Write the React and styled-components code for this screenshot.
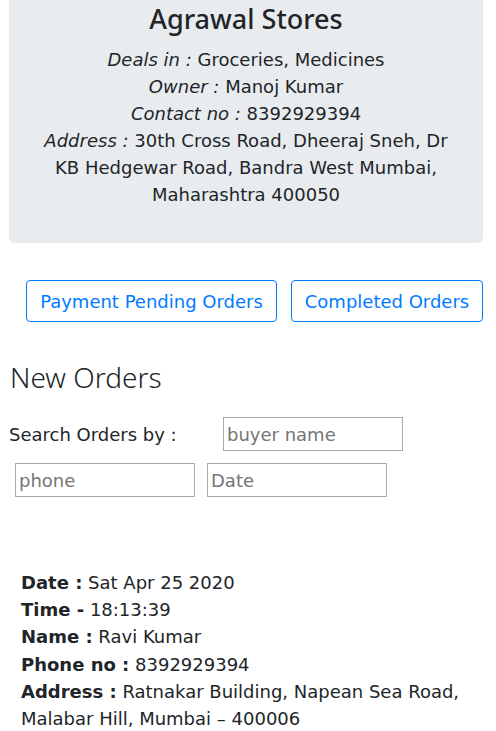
import React from 'react'
import styled, { createGlobalStyle } from 'styled-components'

const GlobalStyle = createGlobalStyle`
  * { box-sizing: border-box; }
  body {
    margin: 0;
    background: #fff;
    color: #212529;
    font-family: "DejaVu Sans", Verdana, sans-serif;
    font-size: 18px;
    line-height: 1.5;
  }
`

const Page = styled.div`
  padding: 0 13px 0 9px;
`

const StoreCard = styled.div`
  background-color: #e9ecef;
  border-radius: 0 0 5px 5px;
  text-align: center;
  padding: 0 27px 35px;
`

const StoreName = styled.h3`
  margin: 0 0 9px;
  font-family: "Noto Sans", "Open Sans", sans-serif;
  font-weight: 500;
  font-size: 27px;
  line-height: 37px;
`

const Info = styled.div`
  line-height: 27px;
`

const Label = styled.i`
  font-style: italic;
`

const ButtonRow = styled.div`
  display: flex;
  justify-content: flex-end;
  gap: 14px;
  margin-top: 37px;
`

const OutlineButton = styled.button`
  font-family: "DejaVu Sans", Verdana, sans-serif;
  font-size: 18px;
  line-height: 27px;
  color: #007bff;
  background: transparent;
  border: 1px solid #007bff;
  border-radius: 4px;
  padding: 6.5px 8px;
  width: ${p => p.w}px;
`

const SectionTitle = styled.h2`
  margin: 35px 0 0 1px;
  font-family: "Noto Sans", "Open Sans", sans-serif;
  font-weight: 300;
  font-size: 28px;
  line-height: 40px;
`

const SearchRow = styled.div`
  display: flex;
  align-items: center;
  margin-top: ${p => p.top ?? 12}px;
  padding-left: ${p => p.indent ?? 0}px;
  gap: ${p => p.gap ?? 12}px;
`

const SearchLabel = styled.span`
  width: 214px;
  flex-shrink: 0;
`

const Field = styled.input`
  width: 180px;
  height: 34px;
  margin: 0;
  border: 1px solid #a9a9a9;
  padding: 0 3px;
  font-family: "DejaVu Sans", Verdana, sans-serif;
  font-size: 18px;
  color: #212529;
  &::placeholder { color: #757575; }
`

const OrderCard = styled.div`
  margin-top: 72px;
  padding-left: 12px;
  line-height: 27.2px;
`

const Detail = styled.div``

const order = [
  ['Date :', ' Sat Apr 25 2020'],
  ['Time -', ' 18:13:39'],
  ['Name :', ' Ravi Kumar'],
  ['Phone no :', ' 8392929394'],
  ['Address :', ' Ratnakar Building, Napean Sea Road, Malabar Hill, Mumbai – 400006'],
]

export default function App() {
  return (
    <Page>
      <GlobalStyle />
      <StoreCard>
        <StoreName>Agrawal Stores</StoreName>
        <Info><Label>Deals in :</Label> Groceries, Medicines</Info>
        <Info><Label>Owner :</Label> Manoj Kumar</Info>
        <Info><Label>Contact no :</Label> 8392929394</Info>
        <Info>
          <Label>Address :</Label> 30th Cross Road, Dheeraj Sneh, Dr KB Hedgewar Road, Bandra West Mumbai, Maharashtra 400050
        </Info>
      </StoreCard>

      <ButtonRow>
        <OutlineButton w={251}>Payment Pending Orders</OutlineButton>
        <OutlineButton w={192}>Completed Orders</OutlineButton>
      </ButtonRow>

      <SectionTitle>New Orders</SectionTitle>

      <SearchRow top={20} gap={0}>
        <SearchLabel>Search Orders by :</SearchLabel>
        <Field placeholder="buyer name" />
      </SearchRow>
      <SearchRow indent={6} gap={12}>
        <Field placeholder="phone" />
        <Field placeholder="Date" />
      </SearchRow>

      <OrderCard>
        {order.map(([k, v]) => (
          <Detail key={k}><b>{k}</b>{v}</Detail>
        ))}
      </OrderCard>
    </Page>
  )
}
